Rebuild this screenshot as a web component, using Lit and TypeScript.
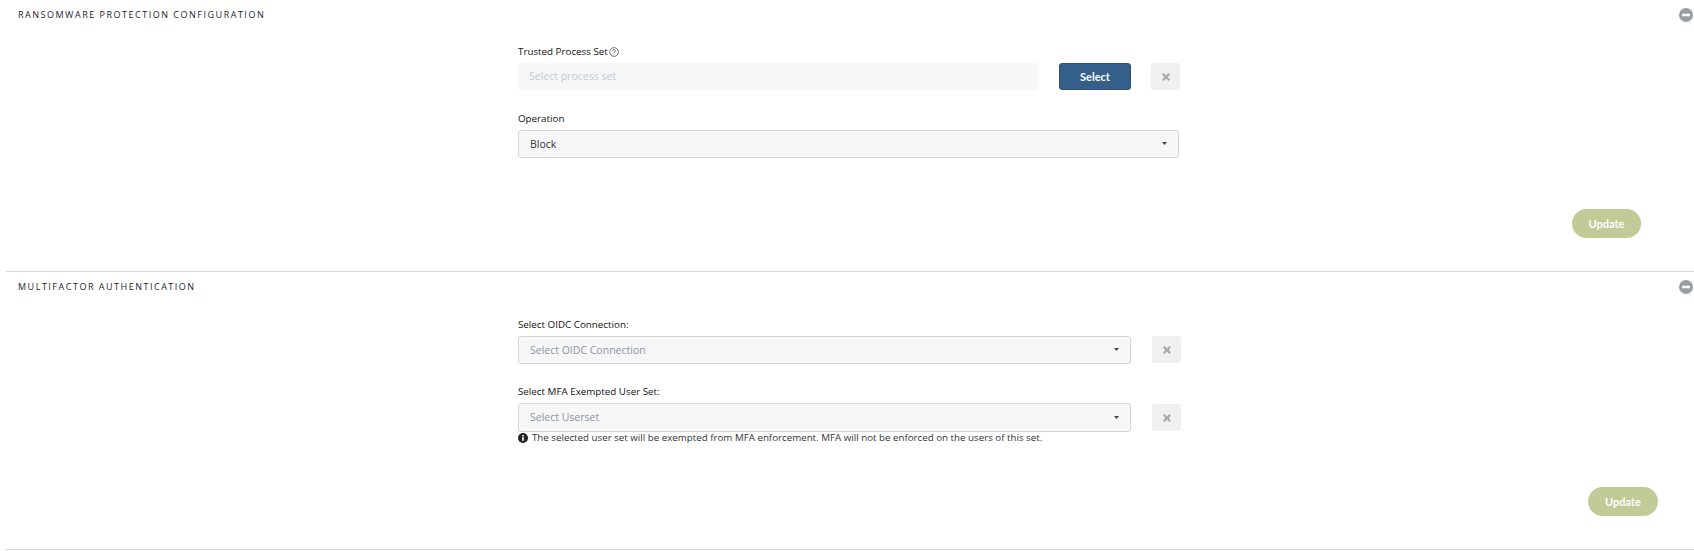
import { LitElement, html, css, svg } from "lit";
import { customElement } from "lit/decorators.js";

const minus = html`<svg class="minus" width="14" height="14" viewBox="0 0 14 14"><circle cx="7" cy="7" r="7" fill="#9a9da3"/><rect x="3" y="5.7" width="8" height="2.6" rx=".4" fill="#fff"/></svg>`;
const caret = html`<svg class="caret" width="5" height="3" viewBox="0 0 5 3"><path d="M0 0h5L2.500 3z" fill="#444"/></svg>`;
const cross = svg`<path d="M1 2.600 2.600 1 5 3.400 7.400 1 9 2.600 6.600 5 9 7.400 7.400 9 5 6.600 2.600 9 1 7.400 3.400 5z" fill="#a9a9a9"/>`;

@customElement("app-root")
export class AppRoot extends LitElement {
  static styles = css`
    :host { display: block; width: 1694px; height: 551px; overflow: hidden; background: #fff; font-family: "Open Sans", sans-serif; color: #222; }
    * { box-sizing: border-box; }
    section { margin-left: 6px; border-bottom: 1px solid #d8d8d8; display: flex; flex-direction: column; }
    .first { height: 272px; }
    .second { height: 278px; }
    header { display: flex; justify-content: space-between; align-items: center; height: 14px; margin-top: 8px; padding-left: 12px; }
    h2 { margin: 0; font-size: 9px; font-weight: 400; letter-spacing: 1.51px; color: #1c2430; line-height: 14px; }
    .minus { display: block; margin-right: 1px; }
    .form { margin-left: 512px; display: flex; flex-direction: column; }
    .first .form { padding-top: 23px; }
    .second .form { padding-top: 24px; }
    label { display: flex; align-items: center; gap: 1px; font-size: 9.800px; line-height: 14px; color: #111; height: 14px; font-weight: 400; }
    .row { display: flex; align-items: flex-start; margin-top: 4px; }
    .row.tall-row { align-items: center; }
    .control { height: 27px; width: 520px; border-radius: 3px; background: #f7f7f7; display: flex; align-items: center; font-size: 10.500px; padding-left: 11px; padding-bottom: 1px; color: #c3c9d3; }
    .select { border: 1px solid #d6d6d6; height: 28px; justify-content: space-between; padding-right: 11px; color: #8b93a3; }
    .select.value { color: #333; }
    .select.tall { height: 29px; }
    .w661 { width: 661px; }
    .w613 { width: 613px; }
    .sel-btn { margin-left: 21px; width: 72px; height: 27px; background: #335f8a; color: #fff; border: 1px solid #2c5277; border-radius: 3px; font: 700 11px "Lato", sans-serif; padding: 0; }
    .x-btn { margin-left: 20px; width: 29px; height: 27px; background: #f0f0f0; border: 0; border-radius: 3px; padding: 0; display: flex; align-items: center; justify-content: center; }
    .second .x-btn { margin-left: 21px; }
    .first .after { margin-top: 22px; }
    .second .after { margin-top: 21px; }
    .note { display: flex; align-items: center; gap: 4px; font-size: 9.750px; line-height: 12px; color: #333; }
    .actions { margin-top: auto; display: flex; justify-content: flex-end; padding-bottom: 33px; }
    .first .actions { padding-right: 53px; }
    .second .actions { padding-right: 36px; }
    .update { width: 69px; height: 29px; border: 0; border-radius: 15px; background: #c0cb97; color: #fff; font: 700 11px "Lato", sans-serif; padding: 0; }
    .second .update { width: 70px; }
  `;

  private xBtn() {
    return html`<button class="x-btn" aria-label="Clear"><svg width="10" height="10" viewBox="0 0 10 10">${cross}</svg></button>`;
  }

  render() {
    return html`
      <section class="first">
        <header><h2>RANSOMWARE PROTECTION CONFIGURATION</h2>${minus}</header>
        <div class="form">
          <label>Trusted Process Set
            <svg width="10" height="10" viewBox="0 0 11 11"><circle cx="5.500" cy="5.500" r="4.800" fill="none" stroke="#444" stroke-width=".8"/><path d="M4 4.300c0-2 3.100-1.900 3.100-.1 0 1.100-1.600 1.100-1.600 2.400" fill="none" stroke="#444" stroke-width=".8"/><circle cx="5.500" cy="8" r=".5" fill="#444"/></svg>
          </label>
          <div class="row">
            <div class="control">Select process set</div>
            <button class="sel-btn">Select</button>
            ${this.xBtn()}
          </div>
          <label class="after">Operation</label>
          <div class="row">
            <div class="control select value w661">Block ${caret}</div>
          </div>
        </div>
        <div class="actions"><button class="update">Update</button></div>
      </section>
      <section class="second">
        <header><h2>MULTIFACTOR AUTHENTICATION</h2>${minus}</header>
        <div class="form">
          <label>Select OIDC Connection:</label>
          <div class="row">
            <div class="control select w613">Select OIDC Connection ${caret}</div>
            ${this.xBtn()}
          </div>
          <label class="after">Select MFA Exempted User Set:</label>
          <div class="row tall-row">
            <div class="control select tall w613">Select Userset ${caret}</div>
            ${this.xBtn()}
          </div>
          <div class="note">
            <svg width="10" height="10" viewBox="0 0 10 10"><circle cx="5" cy="5" r="5" fill="#222"/><rect x="4.200" y="4.200" width="1.600" height="3.600" fill="#fff"/><rect x="4.200" y="2" width="1.600" height="1.500" fill="#fff"/></svg>
            The selected user set will be exempted from MFA enforcement. MFA will not be enforced on the users of this set.
          </div>
        </div>
        <div class="actions"><button class="update">Update</button></div>
      </section>
    `;
  }
}
